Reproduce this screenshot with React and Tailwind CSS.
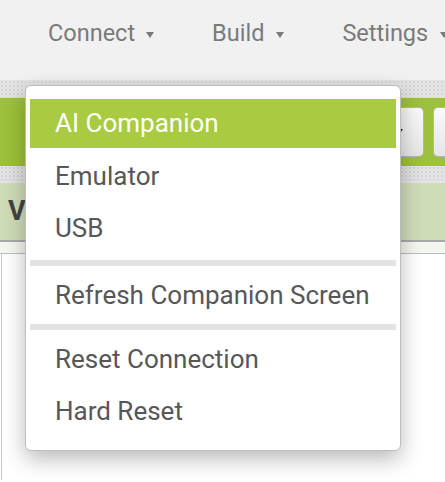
import { Fragment } from 'react';

function Caret({ className }) {
  return (
    <svg className={className} width="8" height="6" viewBox="0 0 8 6">
      <polygon points="0,0 8,0 4,6" fill="currentColor" />
    </svg>
  );
}

const items = [
  { label: 'AI Companion', active: true },
  { label: 'Emulator' },
  { label: 'USB' },
  { sep: true },
  { label: 'Refresh Companion Screen' },
  { sep: true },
  { label: 'Reset Connection' },
  { label: 'Hard Reset' },
];

function App() {
  return (
    <div className="relative w-[445px] h-[482px] overflow-hidden bg-white font-['Roboto',sans-serif]">
      {/* top nav */}
      <div className="h-[80px] bg-[#f1f1f1] flex items-center pb-[12px] pl-[48px] gap-[58px] text-[23.5px] text-[#7a7a7a] whitespace-nowrap">
        <div className="flex items-center">
          <span>Connect</span>
          <Caret className="ml-[11px] mt-[1px] text-[#7a7a7a]" />
        </div>
        <div className="flex items-center">
          <span>Build</span>
          <Caret className="ml-[12px] mt-[1px] text-[#7a7a7a]" />
        </div>
        <div className="flex items-center">
          <span>Settings</span>
          <Caret className="ml-[12px] mt-[1px] text-[#7a7a7a]" />
        </div>
      </div>

      {/* dotted strip */}
      <div className="h-[18px] bg-[#e3e3e3] bg-[radial-gradient(#d6d6d6_1px,transparent_1px)] bg-[length:4px_4px]" />

      {/* green toolbar */}
      <div className="h-[68px] bg-[#9dc13a] flex items-center justify-end gap-[9px] pr-0">
        <div className="h-[50px] w-[94px] rounded-[5px] border border-[#b5b5b5] bg-gradient-to-b from-[#fafafa] to-[#e6e6e6] flex items-center justify-end pr-[20px]">
          <Caret className="text-[#222]" />
        </div>
        <div className="h-[50px] w-[12px] rounded-l-[5px] border border-r-0 border-[#b5b5b5] bg-gradient-to-b from-[#fafafa] to-[#e6e6e6]" />
      </div>

      {/* dotted strip */}
      <div className="h-[17px] bg-[#e3e3e3] bg-[radial-gradient(#d6d6d6_1px,transparent_1px)] bg-[length:4px_4px]" />

      {/* viewer header */}
      <div className="h-[59px] bg-[#cfdcb8] border-b-2 border-[#a9a9a9] flex items-center pl-[8px]">
        <span className="text-[27px] font-bold text-[#444444]">Viewer</span>
      </div>
      <div className="h-[12px] bg-[#f4f6f0] border-b border-[#bdbdbd]" />
      <div className="h-[226px] ml-[1px] border-l border-[#c8c8c8] bg-white" />

      {/* dropdown menu */}
      <div className="absolute left-[25px] top-[85px] w-[376px] rounded-[6px] border border-[#bdbdbd] bg-white pt-[13px] pb-[13px] px-[4px] shadow-[0_8px_22px_rgba(0,0,0,0.28)]">
        {items.map((it, i) => (
          <Fragment key={i}>
            {it.sep ? (
              <div className={`h-[6px] bg-[#e3e3e3] ${i === 3 ? 'mt-[6px] mb-[3px]' : 'mt-[3px] mb-[3px]'}`} />
            ) : it.active ? (
              <div className="h-[49px] mb-[2px] bg-[#a8cb41] flex items-center pl-[25px] text-[26px] text-white">
                {it.label}
              </div>
            ) : (
              <div className="h-[52px] flex items-center pl-[25px] text-[26px] text-[#575757]">
                {it.label}
              </div>
            )}
          </Fragment>
        ))}
      </div>
    </div>
  );
}

export default App;
